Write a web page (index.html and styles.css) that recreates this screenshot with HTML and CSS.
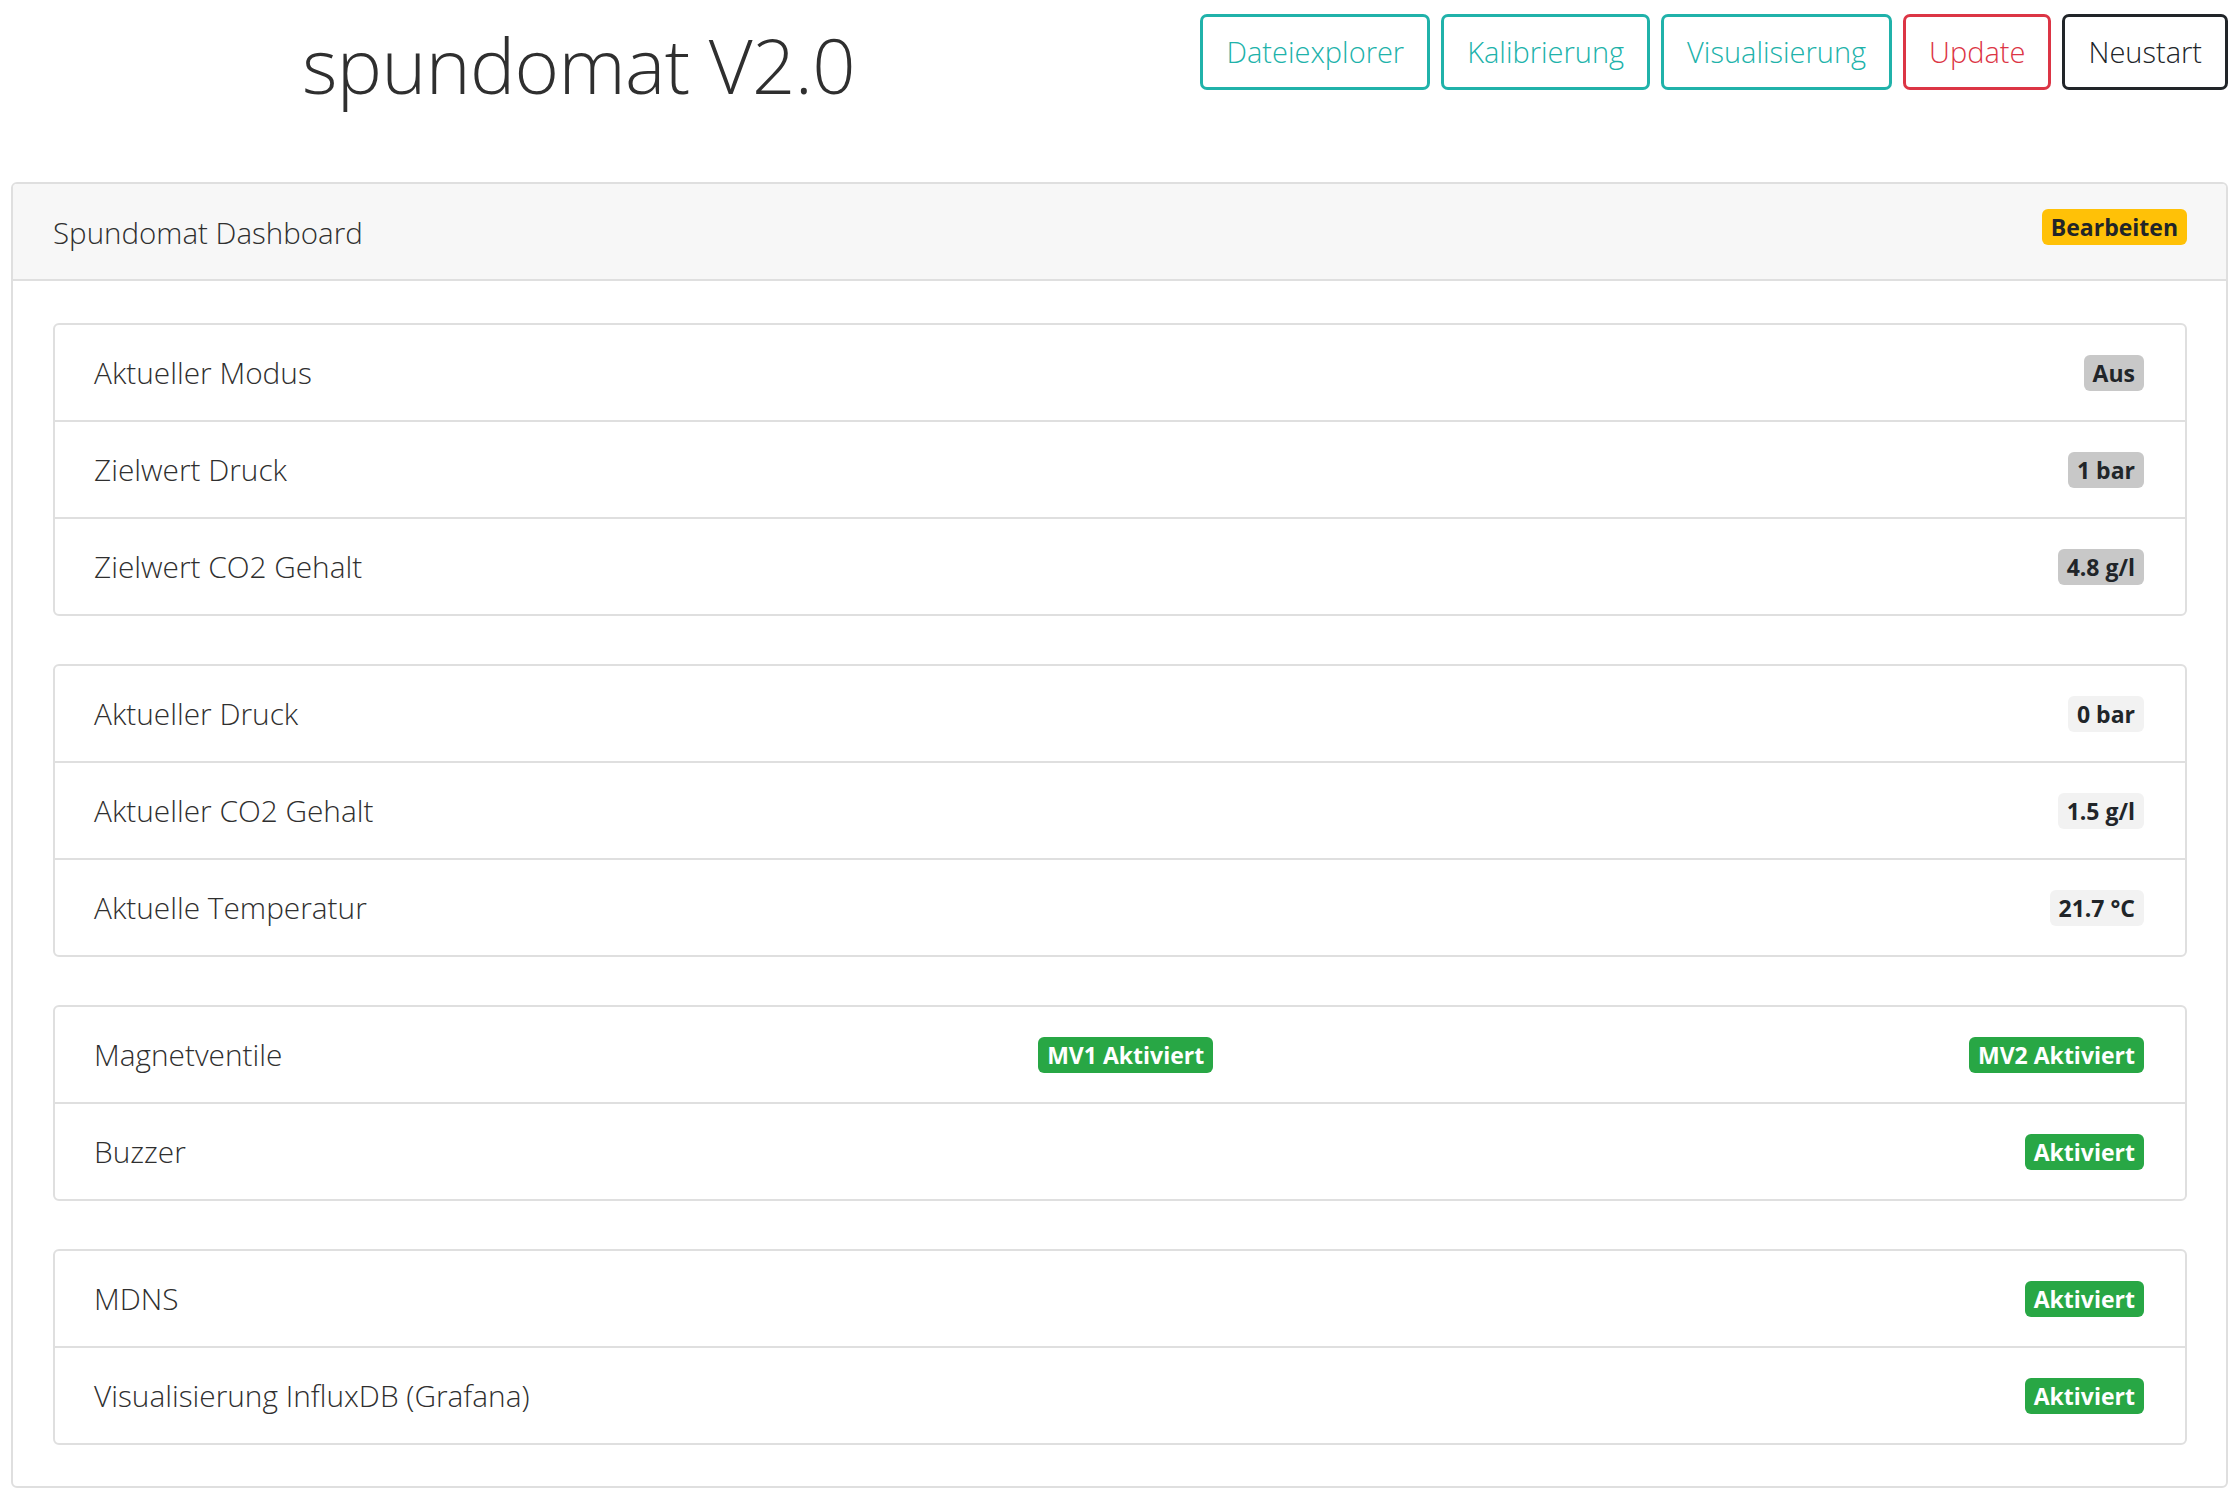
FILE: index.html
```html
<!DOCTYPE html>
<html lang="de">
<head>
<meta charset="utf-8">
<title>spundomat V2.0</title>
<link rel="stylesheet" href="styles.css">
</head>
<body>
<div class="page">
  <header class="topbar">
    <h1 class="title">spundomat V2.0</h1>
    <nav class="actions">
      <button class="btn btn-teal">Dateiexplorer</button>
      <button class="btn btn-teal">Kalibrierung</button>
      <button class="btn btn-teal">Visualisierung</button>
      <button class="btn btn-red">Update</button>
      <button class="btn btn-dark">Neustart</button>
    </nav>
  </header>

  <section class="card">
    <div class="card-header">
      <span class="card-title">Spundomat Dashboard</span>
      <span class="badge badge-warning badge-head">Bearbeiten</span>
    </div>
    <div class="card-body">
      <ul class="list">
        <li class="row"><span>Aktueller Modus</span><span class="badge badge-grey">Aus</span></li>
        <li class="row"><span>Zielwert Druck</span><span class="badge badge-grey">1 bar</span></li>
        <li class="row"><span>Zielwert CO2 Gehalt</span><span class="badge badge-grey">4.8 g/l</span></li>
      </ul>
      <ul class="list">
        <li class="row"><span>Aktueller Druck</span><span class="badge badge-light">0 bar</span></li>
        <li class="row"><span>Aktueller CO2 Gehalt</span><span class="badge badge-light">1.5 g/l</span></li>
        <li class="row"><span>Aktuelle Temperatur</span><span class="badge badge-light">21.7 °C</span></li>
      </ul>
      <ul class="list">
        <li class="row"><span>Magnetventile</span><span class="badge badge-green">MV1 Aktiviert</span><span class="badge badge-green">MV2 Aktiviert</span></li>
        <li class="row"><span>Buzzer</span><span class="badge badge-green">Aktiviert</span></li>
      </ul>
      <ul class="list">
        <li class="row"><span>MDNS</span><span class="badge badge-green">Aktiviert</span></li>
        <li class="row"><span>Visualisierung InfluxDB (Grafana)</span><span class="badge badge-green">Aktiviert</span></li>
      </ul>
    </div>
  </section>
</div>
</body>
</html>
```

FILE: styles.css
```css
* { box-sizing: border-box; }

html, body {
  margin: 0;
  padding: 0;
  background: #ffffff;
}

body {
  font-family: "Open Sans", "Noto Sans", "Liberation Sans", sans-serif;
  font-weight: 300;
  color: #2f2f2f;
}

.page {
  padding: 0 6px 0 11px;
}

.topbar {
  display: flex;
  justify-content: space-between;
  align-items: flex-start;
  height: 182px;
  padding-top: 14px;
}

.title {
  margin: 0 0 0 291px;
  font-size: 76px;
  font-weight: 300;
  line-height: 1;
  color: #2f2f2f;
  padding-top: 13px;
  letter-spacing: -0.6px;
}

.actions {
  display: flex;
  gap: 11px;
}

.btn {
  font-family: inherit;
  font-weight: 300;
  font-size: 29px;
  line-height: 40px;
  padding: 15px 23px;
  background: #ffffff;
  border: 3px solid;
  border-radius: 7px;
  cursor: pointer;
}

.btn-teal { color: #20b2aa; border-color: #20b2aa; }
.btn-red { color: #dc3545; border-color: #dc3545; }
.btn-dark { color: #212529; border-color: #212529; }

.card {
  border: 2px solid #dfdfdf;
  border-radius: 6px;
  overflow: hidden;
}

.card-header {
  display: flex;
  justify-content: space-between;
  align-items: center;
  height: 97px;
  padding: 0 39px 0 40px;
  background: #f7f7f7;
  border-bottom: 2px solid #dfdfdf;
  font-size: 29.5px;
}

.card-title {
  padding-top: 2px;
}

.badge-head {
  margin-bottom: 10px;
  padding-left: 8px;
  padding-right: 8px;
}

.card-body {
  display: flex;
  flex-direction: column;
  gap: 48px;
  padding: 42px 39px 41px 40px;
}

.list {
  list-style: none;
  margin: 0;
  padding: 0;
  border: 2px solid #dfdfdf;
  border-radius: 6px;
}

.row {
  display: flex;
  justify-content: space-between;
  align-items: center;
  height: 95px;
  padding: 0 41px 0 39px;
  font-size: 29.8px;
}

.row + .row {
  border-top: 2px solid #dfdfdf;
  height: 97px;
}

.badge {
  display: inline-block;
  font-family: "Open Sans", "Noto Sans", "Liberation Sans", sans-serif;
  font-weight: 700;
  font-size: 23px;
  line-height: 1;
  padding: 7px 9px 6px;
  border-radius: 6px;
  color: #212529;
  white-space: nowrap;
}

.badge-warning { background: #ffc107; }
.badge-grey { background: #c8c8c8; }
.badge-light { background: #f2f2f2; }
.badge-green { background: #28a745; color: #ffffff; }
```
